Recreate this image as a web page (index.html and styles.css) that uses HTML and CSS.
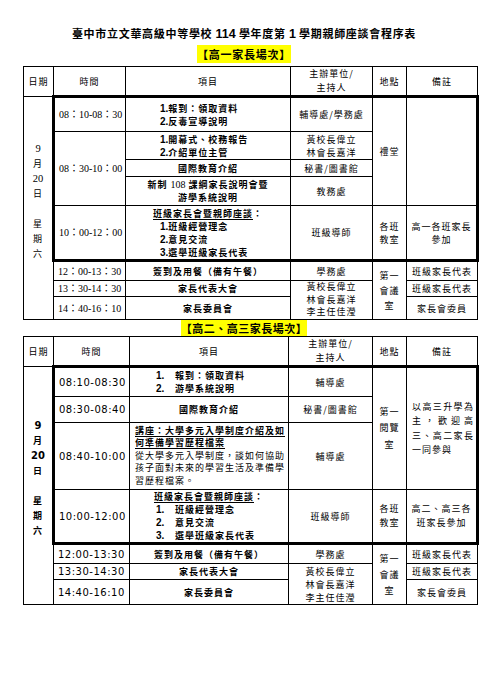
FILE: index.html
```html
<!DOCTYPE html>
<html lang="zh-Hant">
<head>
<meta charset="utf-8">
<title>親師座談會程序表</title>
<link rel="stylesheet" href="styles.css">
</head>
<body>
<div class="page">
  <h1 class="title">臺中市立文華高級中等學校 <span class="num">114</span> 學年度第 <span class="num">1</span> 學期親師座談會程序表</h1>
  <div class="label-row first"><span class="label">【高一家長場次】</span></div>
  <table class="sched t1">
    <colgroup>
      <col class="c-date"><col class="c-time1"><col class="c-item1"><col class="c-host1"><col class="c-place"><col class="c-note">
    </colgroup>
    <tr class="h29">
      <th>日期</th><th>時間</th><th>項目</th><th class="two">主辦單位/<br>主持人</th><th>地點</th><th>備註</th>
    </tr>
    <tr class="h35">
      <td rowspan="8" class="date"><span class="dn">9</span><br>月<br><span class="dn">20</span><br>日<br><br>星<br>期<br>六</td>
      <td class="time tt tl">08：10-08：30</td>
      <td class="item tt"><div class="li"><b class="n">1.</b>報到：領取資料</div><div class="li"><b class="n">2.</b>反毒宣導說明</div></td>
      <td class="tt">輔導處/學務處</td>
      <td rowspan="4" class="place tt">禮堂</td>
      <td rowspan="4" class="tt tr"></td>
    </tr>
    <tr class="h28">
      <td rowspan="3" class="time tl">08：30-10：00</td>
      <td class="item"><div class="li"><b class="n">1.</b>開幕式、校務報告</div><div class="li"><b class="n">2.</b>介紹單位主管</div></td>
      <td>黃校長偉立<br>林會長嘉洋</td>
    </tr>
    <tr class="h17">
      <td class="item">國際教育介紹</td>
      <td>秘書/圖書館</td>
    </tr>
    <tr class="h29">
      <td class="item">新制 <span class="lat">108</span> 課綱家長說明會暨<br>游學系統說明</td>
      <td>教務處</td>
    </tr>
    <tr class="h55">
      <td class="time tl tb">10：00-12：00</td>
      <td class="item tb"><div class="hd"><span class="ul">班級家長會暨親師座談</span>：</div><div class="li"><b class="n">1.</b>班級經營理念</div><div class="li"><b class="n">2.</b>意見交流</div><div class="li"><b class="n">3.</b>選舉班級家長代表</div></td>
      <td class="tb">班級導師</td>
      <td class="place tb">各班教室</td>
      <td class="tb tr">高一各班家長參加</td>
    </tr>
    <tr class="h20">
      <td class="time">12：00-13：30</td>
      <td class="item">簽到及用餐（備有午餐）</td>
      <td>學務處</td>
      <td rowspan="3" class="place lh15">第一會議室</td>
      <td>班級家長代表</td>
    </tr>
    <tr class="h16">
      <td class="time">13：30-14：30</td>
      <td class="item">家長代表大會</td>
      <td rowspan="2" class="tight">黃校長偉立<br>林會長嘉洋<br>李主任佳瀅</td>
      <td>班級家長代表</td>
    </tr>
    <tr class="h23">
      <td class="time">14：40-16：10</td>
      <td class="item">家長委員會</td>
      <td>家長會委員</td>
    </tr>
  </table>

  <div class="label-row second"><span class="label">【高二、高三家長場次】</span></div>
  <table class="sched t2">
    <colgroup>
      <col class="c-date"><col class="c-time2"><col class="c-item2"><col class="c-host2"><col class="c-place"><col class="c-note">
    </colgroup>
    <tr class="h30">
      <th>日期</th><th>時間</th><th>項目</th><th class="two">主辦單位/<br>主持人</th><th>地點</th><th>備註</th>
    </tr>
    <tr class="h30">
      <td rowspan="7" class="date bold"><span class="dn">9</span><br>月<br><span class="dn">20</span><br>日<br><br>星<br>期<br>六</td>
      <td class="time tt tl">08:10-08:30</td>
      <td class="item tt"><div class="li2"><b class="n n2">1.</b>報到：領取資料</div><div class="li2"><b class="n n2">2.</b>游學系統說明</div></td>
      <td class="tt">輔導處</td>
      <td rowspan="3" class="place tt lh165">第一閱覽室</td>
      <td rowspan="3" class="tt tr just">以高三升學為主，歡迎高三、高二家長一同參與</td>
    </tr>
    <tr class="h26">
      <td class="time tl">08:30-08:40</td>
      <td class="item">國際教育介紹</td>
      <td>秘書/圖書館</td>
    </tr>
    <tr class="h67">
      <td class="time tl">08:40-10:00</td>
      <td class="lecture"><div class="lhd ul">講座：大學多元入學制度介紹及如何準備學習歷程檔案</div><div class="lbody">從大學多元入學制度，談如何協助孩子面對未來的學習生活及準備學習歷程檔案。</div></td>
      <td>輔導處</td>
    </tr>
    <tr class="h54">
      <td class="time tl tb">10:00-12:00</td>
      <td class="item tb"><div class="hd"><span class="ul">班級家長會暨親師座談</span>：</div><div class="li2"><b class="n n2">1.</b>班級經營理念</div><div class="li2"><b class="n n2">2.</b>意見交流</div><div class="li2"><b class="n n2">3.</b>選舉班級家長代表</div></td>
      <td class="tb">班級導師</td>
      <td class="place tb lh14">各班教室</td>
      <td class="tb tr lh14">高二、高三各班家長參加</td>
    </tr>
    <tr class="h20">
      <td class="time">12:00-13:30</td>
      <td class="item">簽到及用餐（備有午餐）</td>
      <td>學務處</td>
      <td rowspan="3" class="place lh16">第一會議室</td>
      <td>班級家長代表</td>
    </tr>
    <tr class="h16">
      <td class="time">13:30-14:30</td>
      <td class="item">家長代表大會</td>
      <td rowspan="2">黃校長偉立<br>林會長嘉洋<br>李主任佳瀅</td>
      <td>班級家長代表</td>
    </tr>
    <tr class="h25">
      <td class="time">14:40-16:10</td>
      <td class="item">家長委員會</td>
      <td>家長會委員</td>
    </tr>
  </table>
</div>
</body>
</html>
```

FILE: styles.css
```css
* { box-sizing: border-box; }
html, body { margin: 0; padding: 0; background: #fff; }
body {
  font-family: "Noto Sans CJK TC", "Noto Sans CJK SC", sans-serif;
  color: #000;
}
.page {
  width: 454px;
  margin-left: 23px;
  padding-top: 25px;
}
.title {
  margin: 0;
  padding-right: 12px;
  font-size: 11px;
  line-height: 16px;
  letter-spacing: 0.7px;
  font-weight: 700;
  text-align: center;
}
.title .num {
  font-family: "Liberation Sans", sans-serif;
  font-size: 12.5px;
  letter-spacing: 0;
}
.label-row {
  padding-right: 12px;
  text-align: center;
  font-size: 0;
}
.label-row.first { margin-top: 3px; margin-bottom: 3px; }
.label {
  display: inline-block;
  background: #ffff00;
  font-size: 11px;
  font-weight: 700;
  letter-spacing: 0.75px;
}
.first .label { line-height: 18px; }
.second .label { line-height: 16px; letter-spacing: 0.5px; }

.sched {
  border-collapse: collapse;
  table-layout: fixed;
  width: 454px;
  font-size: 9px;
  letter-spacing: 1px;
  line-height: 13px;
}
.sched th, .sched td {
  border: 1px solid #000;
  padding: 0 2px;
  vertical-align: middle;
  text-align: center;
  font-weight: 400;
}
.sched th.two { line-height: 14px; }

.c-date { width: 30px; }
.c-time1 { width: 72px; }
.c-item1 { width: 165px; }
.c-host1 { width: 82px; }
.c-time2 { width: 76px; }
.c-item2 { width: 159px; }
.c-host2 { width: 84px; }
.c-place { width: 34px; }
.c-note { width: 71px; }

.h16 { height: 16px; }
.h17 { height: 17px; }
.h20 { height: 20px; }
.h23 { height: 23px; }
.h25 { height: 25px; }
.h26 { height: 26px; }
.h28 { height: 28px; }
.h29 { height: 29px; }
.h30 { height: 30px; }
.h35 { height: 35px; }
.h54 { height: 54px; }
.h55 { height: 55px; }
.h67 { height: 67px; }

.tt { border-top: 3px solid #000 !important; }
.tl { border-left: 3px solid #000 !important; }
.tr { border-right: 3px solid #000 !important; }
.tb { border-bottom: 3px solid #000 !important; }

.date {
  line-height: 15px;
  padding-bottom: 15px !important;
}
.date .dn {
  font-family: "Liberation Serif", serif;
  font-size: 10.5px;
  letter-spacing: 0;
}
.date.bold { font-weight: 700; }
.date.bold .dn {
  font-family: "DejaVu Sans", sans-serif;
  font-size: 10px;
  font-weight: 700;
}

.sched td.time {
  text-align: left;
  padding-left: 4px;
  letter-spacing: 0;
  white-space: nowrap;
}
.t1 td.time {
  font-family: "Liberation Serif", "Noto Sans CJK TC", serif;
  font-size: 10px;
}
.t2 td.time {
  font-family: "DejaVu Sans", sans-serif;
  font-size: 10px;
  letter-spacing: 0.5px;
}

.sched td.item { font-weight: 700; padding: 0; }
.item .li { text-align: left; padding-left: 34px; }
.item .li2 { text-align: left; padding-left: 26px; }
.item .hd { text-align: center; }
.n {
  font-family: "Liberation Sans", sans-serif;
  font-size: 10px;
  font-weight: 700;
  letter-spacing: 0;
}
.n2 { display: inline-block; width: 19px; }
.lat {
  font-family: "Liberation Serif", serif;
  font-size: 10px;
  letter-spacing: 0;
  font-weight: 400;
}
.ul {
  text-decoration: underline;
  text-underline-offset: 2px;
  text-decoration-thickness: 1px;
}

.sched td.lecture {
  text-align: left;
  padding: 0 1px 0 5px;
  line-height: 12.5px;
}
.lecture .lhd { font-weight: 700; }
.lecture .lbody { font-weight: 400; }

.sched td.place { padding: 0 2px; }
.sched td.just {
  text-align: justify;
  padding: 0 2px 0 5px;
  line-height: 14.5px;
}
.sched td.tight { line-height: 12.5px; padding: 0; }
.lh14 { line-height: 14px; }
.lh15 { line-height: 15px; }
.lh16 { line-height: 16px; }
.lh165 { line-height: 16.5px; }
```
